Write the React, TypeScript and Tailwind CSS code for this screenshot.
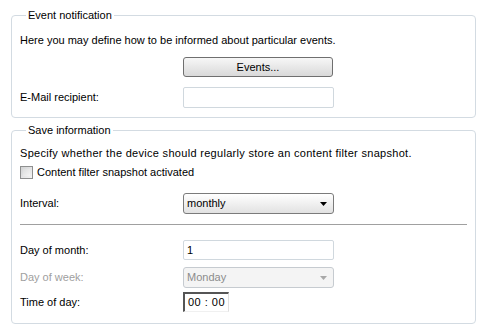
import type { ReactNode } from 'react';

function GroupBox({ title, children, className }: { title: string; children: ReactNode; className?: string }) {
    return (
        <fieldset className={`mx-[11px] rounded-[4px] border border-[#d3dbe2] px-[8px] ${className ?? ''}`}>
            <legend className="ml-[6px] px-[2px] leading-[14px]">{title}</legend>
            {children}
        </fieldset>
    );
}

function Row({ label, disabled, children, className }: { label: string; disabled?: boolean; children: ReactNode; className?: string }) {
    return (
        <div className={`flex items-center ${className ?? ''}`}>
            <span className={`w-[163px] ${disabled ? 'text-[#a0a0a0]' : ''}`}>{label}</span>
            {children}
        </div>
    );
}

function Select({ value, disabled }: { value: string; disabled?: boolean }) {
    return (
        <div
            className={`flex h-[21px] w-[151px] items-center justify-between rounded-[3px] border pl-[3px] pr-[6px] ${
                disabled
                    ? 'border-[#c6cbd0] bg-[#f4f4f4] text-[#8c8c8c]'
                    : 'border-[#7b7b7b] bg-gradient-to-b from-[#ffffff] to-[#e2e2e2]'
            }`}
        >
            <span>{value}</span>
            <svg width="7" height="4" viewBox="0 0 7 4">
                <path d="M0 0h7L3.5 4z" fill={disabled ? '#a8a8a8' : '#000'} />
            </svg>
        </div>
    );
}

export default function App() {
    return (
        <div className="h-[333px] w-[487px] bg-white pt-[8px] text-[11px] text-black [font-family:'Liberation_Sans',Arial,sans-serif]">
            <GroupBox title="Event notification" className="h-[110px]">
                <p className="mt-[11px] leading-[14px]">Here you may define how to be informed about particular events.</p>
                <div className="mt-[10px] flex pl-[163px]">
                    <button className="h-[20px] w-[150px] rounded-[3px] border border-[#6f6f6f] bg-gradient-to-b from-[#f7f7f7] to-[#d9d9d9] leading-[18px]">
                        Events...
                    </button>
                </div>
                <Row label="E-Mail recipient:" className="mt-[10px]">
                    <div className="h-[21px] w-[151px] rounded-[2px] border border-[#d0d8de] bg-white" />
                </Row>
            </GroupBox>

            <GroupBox title="Save information" className="mt-[5px] h-[201px]">
                <p className="mt-[9px] leading-[14px] tracking-[0.3px]">Specify whether the device should regularly store an content filter snapshot.</p>
                <label className="mt-[5px] flex items-center gap-[4px]">
                    <span className="h-[13px] w-[13px] border border-[#8e8f8f] bg-gradient-to-br from-[#d2d3d4] to-[#f4f4f4] p-[2px]">
                        <span className="block h-full w-full bg-gradient-to-br from-[#dcdddd] to-[#f4f4f4]" />
                    </span>
                    <span className="leading-[14px]">Content filter snapshot activated</span>
                </label>
                <Row label="Interval:" className="mt-[14px]">
                    <Select value="monthly" />
                </Row>
                <div className="mt-[10px] h-px bg-[#a0a0a0]" />
                <Row label="Day of month:" className="mt-[15px]">
                    <div className="flex h-[20px] w-[151px] items-center rounded-[2px] border border-[#d0d8de] bg-white pl-[3px]">1</div>
                </Row>
                <Row label="Day of week:" disabled className="mt-[7px]">
                    <Select value="Monday" disabled />
                </Row>
                <Row label="Time of day:" className="mt-[4px]">
                    <div className="flex h-[20px] w-[46px] items-center justify-center border-b border-l-2 border-r border-t-2 border-b-[#f0f0f0] border-l-[#555555] border-r-[#e0e0e0] border-t-[#555555] bg-white tracking-[0.5px]">
                        00 : 00
                    </div>
                </Row>
            </GroupBox>
        </div>
    );
}
